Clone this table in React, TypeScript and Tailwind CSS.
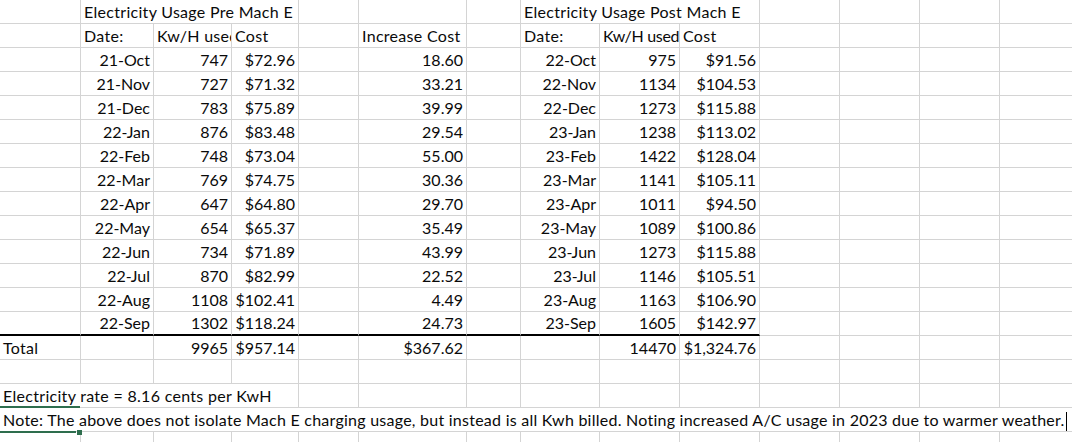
import React from "react";

type Align = "left" | "right";

const W = [
  "w-[81px]",
  "w-[73px]",
  "w-[78px]",
  "w-[67px]",
  "w-[60px]",
  "w-[108px]",
  "w-[54px]",
  "w-[79px]",
  "w-[80px]",
  "w-[80px]",
  "w-[80px]",
  "w-[80px]",
  "w-[80px]",
  "w-[80px]",
];

const months = [
  ["21-Oct", "747", "$72.96", "18.60", "22-Oct", "975", "$91.56"],
  ["21-Nov", "727", "$71.32", "33.21", "22-Nov", "1134", "$104.53"],
  ["21-Dec", "783", "$75.89", "39.99", "22-Dec", "1273", "$115.88"],
  ["22-Jan", "876", "$83.48", "29.54", "23-Jan", "1238", "$113.02"],
  ["22-Feb", "748", "$73.04", "55.00", "23-Feb", "1422", "$128.04"],
  ["22-Mar", "769", "$74.75", "30.36", "23-Mar", "1141", "$105.11"],
  ["22-Apr", "647", "$64.80", "29.70", "23-Apr", "1011", "$94.50"],
  ["22-May", "654", "$65.37", "35.49", "23-May", "1089", "$100.86"],
  ["22-Jun", "734", "$71.89", "43.99", "23-Jun", "1273", "$115.88"],
  ["22-Jul", "870", "$82.99", "22.52", "23-Jul", "1146", "$105.51"],
  ["22-Aug", "1108", "$102.41", "4.49", "23-Aug", "1163", "$106.90"],
  ["22-Sep", "1302", "$118.24", "24.73", "23-Sep", "1605", "$142.97"],
];

function Cell({
  w,
  text,
  align = "left",
  thick = false,
  clip = false,
  label = false,
  extra = "",
}: {
  w: string;
  text?: React.ReactNode;
  align?: Align;
  thick?: boolean;
  clip?: boolean;
  label?: boolean;
  extra?: string;
}) {
  return (
    <div
      className={`${w} h-6 shrink-0 flex items-end pb-[3px] px-[3px] whitespace-nowrap border-r border-r-[#d4d4d4] ${
        thick ? "border-b-2 border-b-black" : "border-b border-b-[#d4d4d4]"
      } ${align === "right" ? "justify-end" : "justify-start"} ${
        clip ? "overflow-hidden" : ""
      } ${label ? "tracking-[0.3px]" : ""} ${extra}`}
    >
      {text}
    </div>
  );
}

function Blanks({ from }: { from: number }) {
  return (
    <>
      {W.slice(from).map((w, i) => (
        <Cell key={i} w={w} />
      ))}
    </>
  );
}

export default function App() {
  return (
    <div className="relative w-[1072px] h-[442px] overflow-hidden bg-white text-[#0a0a0a] text-[16px] leading-none font-['Lato','Liberation_Sans',sans-serif]">
      {/* row 1 */}
      <div className="flex">
        <Cell w={W[0]} />
        <Cell w="w-[218px]" text="Electricity Usage Pre Mach E" label />
        <Cell w={W[4]} />
        <Cell w={W[5]} />
        <Cell w={W[6]} />
        <Cell w="w-[239px]" text="Electricity Usage Post Mach E" label />
        <Blanks from={10} />
      </div>
      {/* row 2 */}
      <div className="flex">
        <Cell w={W[0]} />
        <Cell w={W[1]} text="Date:" label />
        <Cell w={W[2]} text="Kw/H used" label clip />
        <Cell w={W[3]} text="Cost" label />
        <Cell w={W[4]} />
        <Cell w={W[5]} text="Increase Cost" label />
        <Cell w={W[6]} />
        <Cell w={W[7]} text="Date:" label />
        <Cell w={W[8]} text="Kw/H used" clip extra="tracking-[-0.3px] pr-0" />
        <Cell w={W[9]} text="Cost" label />
        <Blanks from={10} />
      </div>
      {months.map((m, r) => {
        const last = r === months.length - 1;
        return (
          <div className="flex" key={m[0]}>
            <Cell w={W[0]} thick={last} />
            <Cell w={W[1]} text={m[0]} align="right" thick={last} />
            <Cell w={W[2]} text={m[1]} align="right" thick={last} />
            <Cell w={W[3]} text={m[2]} align="right" thick={last} />
            <Cell w={W[4]} thick={last} />
            <Cell w={W[5]} text={m[3]} align="right" thick={last} />
            <Cell w={W[6]} thick={last} />
            <Cell w={W[7]} text={m[4]} align="right" thick={last} />
            <Cell w={W[8]} text={m[5]} align="right" thick={last} />
            <Cell w={W[9]} text={m[6]} align="right" thick={last} />
            <Blanks from={10} />
          </div>
        );
      })}
      {/* totals */}
      <div className="flex">
        <Cell w={W[0]} text="Total" label />
        <Cell w={W[1]} />
        <Cell w={W[2]} text="9965" align="right" />
        <Cell w={W[3]} text="$957.14" align="right" />
        <Cell w={W[4]} />
        <Cell w={W[5]} text="$367.62" align="right" />
        <Cell w={W[6]} />
        <Cell w={W[7]} />
        <Cell w={W[8]} text="14470" align="right" />
        <Cell w={W[9]} text="$1,324.76" align="right" />
        <Blanks from={10} />
      </div>
      <div className="flex">
        <Blanks from={0} />
      </div>
      <div className="flex">
        <Cell w="w-[299px]" text="Electricity rate = 8.16 cents per KwH" label />
        <Blanks from={4} />
      </div>
      <div className="flex">
        <div className="w-[1080px] h-6 shrink-0 flex items-end pb-[3px] px-[3px] whitespace-nowrap tracking-[0.25px] border-b border-b-[#d4d4d4]">
          <span>
            Note: The above does not isolate Mach E charging usage, but instead is all Kwh billed. Noting increased A/C usage in 2023 due to warmer weather.
          </span>
          <span className="inline-block w-px h-[19px] bg-black ml-[1px] mb-[-3px]" />
        </div>
      </div>
      <div className="flex">
        <Blanks from={0} />
      </div>

      {/* active cell selection */}
      <div className="absolute left-0 top-[406px] w-[80px] h-[2px] bg-[#2e6e4e]" />
      <div className="absolute left-0 top-[431px] w-[76px] h-[2px] bg-[#2e6e4e]" />
      <div className="absolute left-[77px] top-[430px] w-[5px] h-[5px] bg-[#2e6e4e]" />
    </div>
  );
}
